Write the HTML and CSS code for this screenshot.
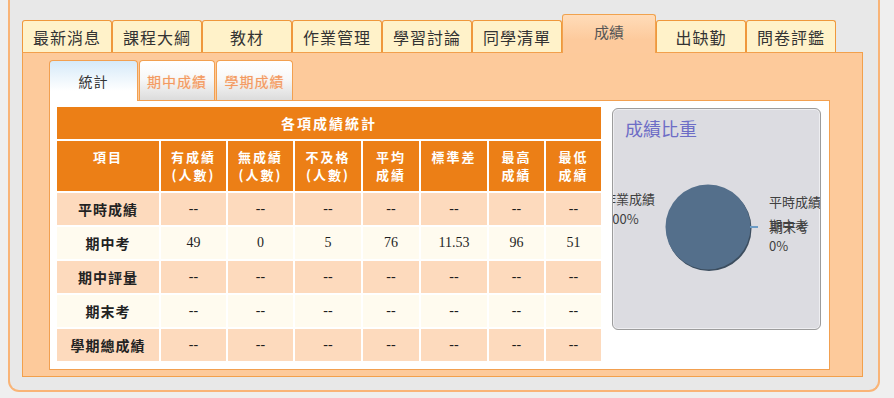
FILE: index.html
```html
<!DOCTYPE html>
<html lang="zh-Hant">
<head>
<meta charset="utf-8">
<title>成績</title>
<link rel="stylesheet" href="styles.css">
</head>
<body>
<div class="frame">
  <div class="tabs">
    <div class="tab">最新消息</div>
    <div class="tab">課程大綱</div>
    <div class="tab">教材</div>
    <div class="tab">作業管理</div>
    <div class="tab">學習討論</div>
    <div class="tab">同學清單</div>
    <div class="tab active">成績</div>
    <div class="tab">出缺勤</div>
    <div class="tab">問卷評鑑</div>
  </div>
  <div class="panel">
    <div class="subtabs">
      <div class="subtab active w1">統計</div>
      <div class="subtab w2">期中成績</div>
      <div class="subtab w3">學期成績</div>
    </div>
    <div class="content">
      <table class="stats">
        <colgroup>
          <col class="c1"><col class="c2"><col class="c2"><col class="c3"><col class="c4"><col class="c3"><col class="c5"><col class="c5">
        </colgroup>
        <thead>
          <tr class="title-row"><th colspan="8" class="title">各項成績統計</th></tr>
          <tr class="head-row">
            <th>項目</th>
            <th>有成績<br>(人數)</th>
            <th>無成績<br>(人數)</th>
            <th>不及格<br>(人數)</th>
            <th>平均<br>成績</th>
            <th>標準差</th>
            <th>最高<br>成績</th>
            <th>最低<br>成績</th>
          </tr>
        </thead>
        <tbody>
          <tr class="odd"><td class="item">平時成績</td><td>--</td><td>--</td><td>--</td><td>--</td><td>--</td><td>--</td><td>--</td></tr>
          <tr class="even"><td class="item">期中考</td><td>49</td><td>0</td><td>5</td><td>76</td><td>11.53</td><td>96</td><td>51</td></tr>
          <tr class="odd"><td class="item">期中評量</td><td>--</td><td>--</td><td>--</td><td>--</td><td>--</td><td>--</td><td>--</td></tr>
          <tr class="even"><td class="item">期末考</td><td>--</td><td>--</td><td>--</td><td>--</td><td>--</td><td>--</td><td>--</td></tr>
          <tr class="odd"><td class="item">學期總成績</td><td>--</td><td>--</td><td>--</td><td>--</td><td>--</td><td>--</td><td>--</td></tr>
        </tbody>
      </table>
      <div class="chart">
        <svg class="chart-svg" width="207" height="220" viewBox="0 0 207 220">
          <text class="chart-title" x="12" y="27">成績比重</text>
          <circle cx="96" cy="119.5" r="42.5" fill="#3c4d5e"/>
          <circle cx="95" cy="118" r="42.5" fill="#546f8b"/>
          <line x1="137" y1="118" x2="145" y2="118" stroke="#6c9cc6" stroke-width="2"/>
          <text class="chart-label" x="-10" y="95">作業成績</text>
          <text class="chart-label" x="-8" y="115">100%</text>
          <text class="chart-label" x="156" y="98">平時成績</text>
          <text class="chart-label" x="156" y="121">期中考</text>
          <text class="chart-label" x="157" y="123">期末考</text>
          <text class="chart-label" x="156" y="142">0%</text>
        </svg>
      </div>
    </div>
  </div>
</div>
</body>
</html>
```
FILE: styles.css
```css
html, body {
  margin: 0;
  padding: 0;
}
body {
  background: #efefef;
  width: 894px;
  height: 398px;
  overflow: hidden;
  font-family: "Noto Sans CJK TC", "Noto Sans", sans-serif;
}
.frame {
  box-sizing: border-box;
  margin-left: 8px;
  width: 872px;
  height: 392px;
  border: 2px solid #f9b477;
  border-top: none;
  border-radius: 0 0 11px 11px;
  background: #e8e8e8;
  padding: 14px 0 0 12px;
}
.tabs {
  display: flex;
  align-items: flex-end;
  height: 38px;
}
.tab {
  box-sizing: border-box;
  width: 90px;
  height: 32px;
  border: 1px solid #ef983c;
  border-bottom: none;
  border-radius: 3px 3px 0 0;
  background: #fff2c9;
  font-size: 16px;
  letter-spacing: 1px;
  line-height: 1;
  color: #333;
  display: flex;
  align-items: center;
  justify-content: center;
}
.tab.active {
  width: 94px;
  height: 39px;
  margin-bottom: -1px;
  position: relative;
  z-index: 1;
  border-color: #f0a24e;
  background: linear-gradient(#ffdcb9, #fdca9c 65%);
  font-size: 15px;
  letter-spacing: 0;
  color: #555;
  align-items: flex-start;
  padding-top: 9px;
}
.panel {
  box-sizing: border-box;
  width: 841px;
  height: 325px;
  border: 1px solid #f2a04c;
  background: #fdca9b;
  padding: 7px 32px 0 26px;
}
.subtabs {
  display: flex;
  align-items: flex-end;
  gap: 1px;
  height: 40px;
}
.subtab {
  box-sizing: border-box;
  height: 40px;
  border: 1px solid #f2a050;
  border-bottom: none;
  border-radius: 4px 4px 0 0;
  background: linear-gradient(#ffffff, #f8f8f8 45%, #dcdcdc);
  font-size: 14px;
  letter-spacing: 1px;
  line-height: 1;
  color: #f39a62;
  text-shadow: 0 0 1px #fbc9a4;
  display: flex;
  align-items: center;
  justify-content: center;
}
.subtab.w1 { width: 89px; }
.subtab.w2 { width: 76px; }
.subtab.w3 { width: 77px; }
.subtab.active {
  height: 41px;
  margin-bottom: -1px;
  position: relative;
  z-index: 1;
  background: linear-gradient(#d6eaf8, #ffffff 75%);
  color: #333;
  text-shadow: none;
}
.content {
  box-sizing: border-box;
  width: 781px;
  height: 270px;
  border: 1px solid #f2a050;
  background: #fff;
  display: flex;
  align-items: flex-start;
  gap: 9px;
  padding: 4px 0 0 5px;
}
.stats {
  border-spacing: 2px;
  table-layout: fixed;
  width: 548px;
  background: #fff;
  flex: none;
}
.c1 { width: 102px; }
.c2 { width: 65px; }
.c3 { width: 66px; }
.c4 { width: 56px; }
.c5 { width: 55px; }
.stats th, .stats td {
  padding: 0;
  text-align: center;
}
.title-row { height: 32px; }
.stats th.title {
  background: #ec7f16;
  color: #fff;
  font-size: 14px;
  letter-spacing: 2px;
  font-weight: bold;
  vertical-align: middle;
}
.head-row { height: 50px; }
.head-row th {
  background: #ec7f16;
  color: #fff;
  font-size: 13px;
  letter-spacing: 2px;
  font-weight: bold;
  line-height: 18px;
  vertical-align: top;
  padding-top: 7px;
}
.stats tbody tr { height: 32px; }
.stats tr.odd td { background: #fddabd; }
.stats tr.even td { background: #fffbef; }
.stats td {
  font-family: "Liberation Serif", serif;
  font-size: 14px;
  color: #1e1e1e;
  vertical-align: middle;
}
.stats td.item {
  font-family: "Noto Sans CJK TC", "Noto Sans", sans-serif;
  font-weight: bold;
  letter-spacing: 1px;
  color: #222;
}
.chart {
  box-sizing: border-box;
  flex: none;
  width: 209px;
  height: 222px;
  margin-top: 3px;
  border: 1px solid #9c9c9c;
  border-radius: 6px;
  background: #dcdce1;
  box-shadow: inset 0 0 0 1px #eeeef1;
  overflow: hidden;
}
.chart-svg {
  display: block;
  overflow: hidden;
}
.chart-title {
  font-family: "Noto Sans CJK TC", "Noto Sans", sans-serif;
  font-size: 18px;
  fill: #6d6dc6;
}
.chart-label {
  font-family: "Noto Sans CJK TC", "Noto Sans", sans-serif;
  font-size: 13px;
  fill: #404040;
}
```
